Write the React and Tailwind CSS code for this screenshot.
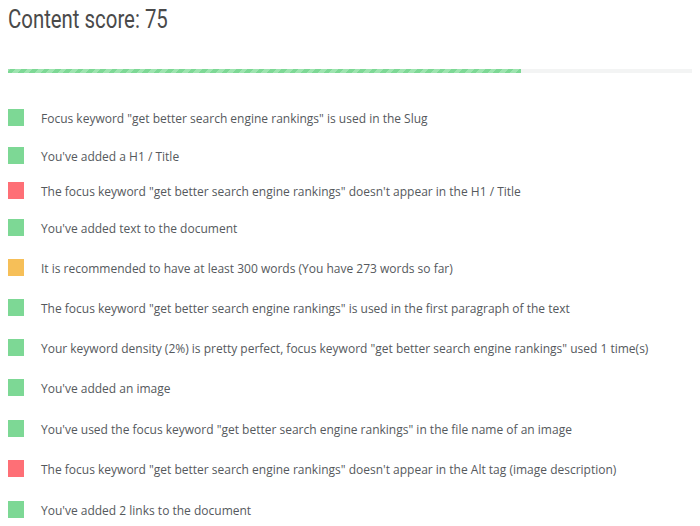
const checks = [
  { status: 'good', h: 'h-[38px]', text: 'Focus keyword "get better search engine rankings" is used in the Slug' },
  { status: 'good', h: 'h-[35px]', text: "You've added a H1 / Title" },
  { status: 'bad', h: 'h-[37px]', text: 'The focus keyword "get better search engine rankings" doesn\'t appear in the H1 / Title' },
  { status: 'good', h: 'h-[40px]', text: "You've added text to the document" },
  { status: 'warn', h: 'h-[40px]', text: 'It is recommended to have at least 300 words (You have 273 words so far)' },
  { status: 'good', h: 'h-[40px]', text: 'The focus keyword "get better search engine rankings" is used in the first paragraph of the text' },
  { status: 'good', h: 'h-[40px]', text: 'Your keyword density (2%) is pretty perfect, focus keyword "get better search engine rankings" used 1 time(s)' },
  { status: 'good', h: 'h-[41px]', text: "You've added an image" },
  { status: 'good', h: 'h-[40px]', text: 'You\'ve used the focus keyword "get better search engine rankings" in the file name of an image' },
  { status: 'bad', h: 'h-[41px]', text: 'The focus keyword "get better search engine rankings" doesn\'t appear in the Alt tag (image description)' },
  { status: 'good', h: 'h-[40px]', text: "You've added 2 links to the document" },
]

const squareColors = {
  good: 'bg-[#7dd895]',
  bad: 'bg-[#fe6f76]',
  warn: 'bg-[#f6bf58]',
}

export default function App() {
  const score = 75

  return (
    <div className="w-[700px] h-[526px] overflow-hidden bg-white font-['Open_Sans',sans-serif]">
      <div className="pl-[8px] pr-[8px]">
        <h1 className="pt-[5px] h-[42px] text-[25px] leading-[30px] text-[#4a4a4a] font-['Roboto',sans-serif] font-normal origin-left scale-x-[0.815] whitespace-nowrap">
          Content score: {score}
        </h1>

        {/* progress bar */}
        <div className="mt-[27px] h-[4px] w-[684px] bg-[#f3f4f4]">
          <div
            className="h-full bg-[repeating-linear-gradient(-45deg,#7dd895_0px,#7dd895_4px,#9ee4b0_4px,#9ee4b0_8px)]"
            style={{ width: `${score}%` }}
          />
        </div>

        <ul className="mt-[36px]">
          {checks.map((item, i) => (
            <li key={i} className={`flex items-start ${item.h}`}>
              <span className={`w-[16px] h-[17px] shrink-0 ${squareColors[item.status]}`} />
              <span className="ml-[17px] mt-[1px] text-[12px] leading-[18px] text-[#55595d] whitespace-nowrap">
                {item.text}
              </span>
            </li>
          ))}
        </ul>
      </div>
    </div>
  )
}
